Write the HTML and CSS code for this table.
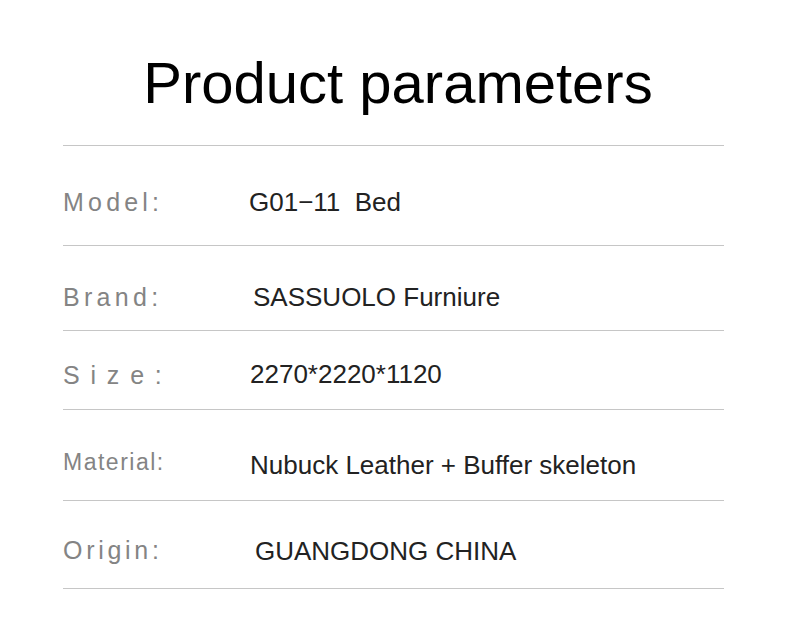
FILE: index.html
```html
<!DOCTYPE html>
<html>
<head>
<meta charset="utf-8">
<link rel="stylesheet" href="styles.css">
</head>
<body>
<h1 class="title">Product parameters</h1>
<div class="params">
  <div class="row row-model">
    <span class="label label-model">Model:</span>
    <span class="value value-model">G01−11&nbsp; Bed</span>
  </div>
  <div class="row row-brand">
    <span class="label label-brand">Brand:</span>
    <span class="value value-brand">SASSUOLO Furniure</span>
  </div>
  <div class="row row-size">
    <span class="label label-size">Size:</span>
    <span class="value value-size">2270*2220*1120</span>
  </div>
  <div class="row row-material">
    <span class="label label-material">Material:</span>
    <span class="value value-material">Nubuck Leather + Buffer skeleton</span>
  </div>
  <div class="row row-origin">
    <span class="label label-origin">Origin:</span>
    <span class="value value-origin">GUANGDONG CHINA</span>
  </div>
</div>
</body>
</html>
```

FILE: styles.css
```css
html, body {
  margin: 0;
  padding: 0;
  background: #ffffff;
}
body {
  width: 790px;
  height: 620px;
  font-family: "Liberation Sans", Arial, sans-serif;
  overflow: hidden;
}
.title {
  margin: 0;
  padding: 54px 0 0 6px;
  height: 58px;
  line-height: 58px;
  font-size: 58px;
  font-weight: 400;
  color: #000;
  text-align: center;
  margin-bottom: 33px;
}
.params {
  margin-left: 63px;
  width: 661px;
  border-top: 1px solid #c6c6c6;
}
.row {
  display: flex;
  align-items: flex-start;
  border-bottom: 1px solid #c6c6c6;
  box-sizing: border-box;
}
.label {
  display: block;
  width: 186px;
  flex: none;
  font-size: 25px;
  line-height: 24px;
  color: #848484;
  letter-spacing: 4.2px;
}
.value {
  display: block;
  font-size: 26px;
  line-height: 26px;
  color: #222222;
  white-space: nowrap;
}
.row-model { height: 100px; padding-top: 44px; }
.value-model { margin-top: -1px; margin-left: 0; }

.row-brand { height: 85px; padding-top: 39px; }
.label-brand { letter-spacing: 4.3px; }
.value-brand { margin-top: -1px; margin-left: 4px; }

.row-size { height: 79px; padding-top: 32px; }
.label-size { letter-spacing: 10.8px; }
.value-size { margin-top: -2px; margin-left: 1px; }

.row-material { height: 91px; padding-top: 40px; }
.label-material { font-size: 23px; letter-spacing: 1.5px; }
.value-material { margin-top: 2px; margin-left: 1px; }

.row-origin { height: 88px; padding-top: 37px; }
.label-origin { letter-spacing: 3.7px; }
.value-origin { margin-top: 0; margin-left: 6px; }
```
